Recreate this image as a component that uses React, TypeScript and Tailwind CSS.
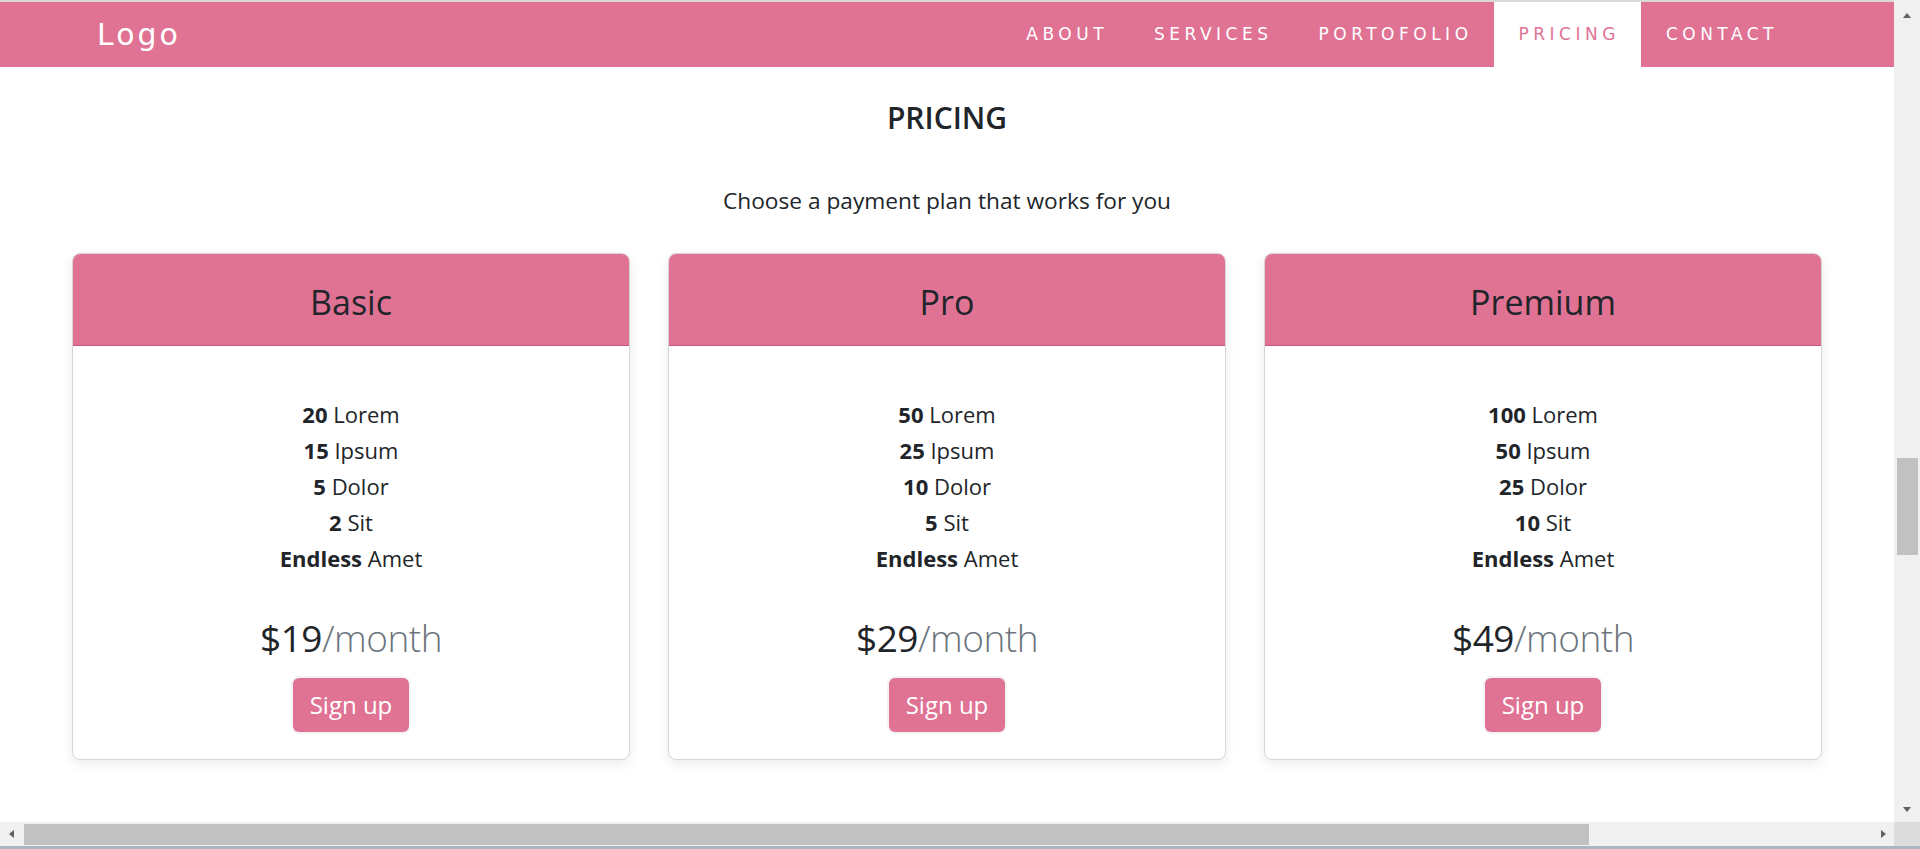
import React from 'react'

type Plan = {
  name: string
  price: number
  items: [string, string][]
}

const plans: Plan[] = [
  {
    name: 'Basic',
    price: 19,
    items: [['20', 'Lorem'], ['15', 'Ipsum'], ['5', 'Dolor'], ['2', 'Sit'], ['Endless', 'Amet']],
  },
  {
    name: 'Pro',
    price: 29,
    items: [['50', 'Lorem'], ['25', 'Ipsum'], ['10', 'Dolor'], ['5', 'Sit'], ['Endless', 'Amet']],
  },
  {
    name: 'Premium',
    price: 49,
    items: [['100', 'Lorem'], ['50', 'Ipsum'], ['25', 'Dolor'], ['10', 'Sit'], ['Endless', 'Amet']],
  },
]

const navLinks = ['ABOUT', 'SERVICES', 'PORTOFOLIO', 'PRICING', 'CONTACT']

function Arrow({ dir }: { dir: 'up' | 'down' | 'left' | 'right' }) {
  const points = {
    up: '0,5 4,0 8,5',
    down: '0,0 8,0 4,5',
    left: '5,0 5,8 0,4',
    right: '0,0 0,8 5,4',
  }[dir]
  const vertical = dir === 'up' || dir === 'down'
  return (
    <svg width={vertical ? 8 : 5} height={vertical ? 5 : 8} viewBox={vertical ? '0 0 8 5' : '0 0 5 8'}>
      <polygon points={points} fill="#606060" />
    </svg>
  )
}

function PricingCard({ plan }: { plan: Plan }) {
  return (
    <div className="rounded-lg border border-[#d6d6d6] bg-white shadow-[0_4px_12px_rgba(0,0,0,0.08)] overflow-hidden">
      <div className="h-[92px] pt-[4px] bg-[#e07294] border-b border-[#c8587c] flex items-center justify-center">
        <h1 className="text-[34px] leading-none text-[#212529]">{plan.name}</h1>
      </div>
      <div className="pt-[50px] pb-[27px] flex flex-col items-center">
        <ul className="text-[22px] leading-[36px] text-center">
          {plan.items.map(([count, label], i) => (
            <li key={i}>
              <span className="font-bold">{count}</span> {label}
            </li>
          ))}
        </ul>
        <p className="mt-[38px] text-[37px] leading-[48px] tracking-[-0.5px]">
          ${plan.price}
          <span className="text-[#6c757d] font-light">/month</span>
        </p>
        <button className="mt-[16px] h-[54px] w-[116px] rounded-md bg-[#e07294] text-white text-[24px] ring-2 ring-[#f4f4f4]">
          Sign up
        </button>
      </div>
    </div>
  )
}

export default function App() {
  return (
    <div className="h-[849px] w-full overflow-hidden flex flex-col bg-white text-[#212529] font-['Open_Sans',sans-serif]">
      <div className="flex flex-1 min-h-0">
        <div className="flex-1 min-w-0 flex flex-col">
          <div className="h-[2px] bg-[#d9d9d9]" />
          <nav className="h-[65px] bg-[#e07294] flex items-stretch font-['DejaVu_Sans',sans-serif] text-white">
            <a className="pl-[97px] flex items-center text-[30px] tracking-[3px]">Logo</a>
            <ul className="ml-auto mr-[95px] flex items-stretch text-[17px] tracking-[4.5px]">
              {navLinks.map((link) => (
                <li
                  key={link}
                  className={
                    link === 'PRICING'
                      ? 'flex items-center pl-[25px] pr-[21px] bg-white text-[#e07294]'
                      : 'flex items-center pl-[25px] pr-[21px]'
                  }
                >
                  {link}
                </li>
              ))}
            </ul>
          </nav>

          <section className="flex flex-col items-center">
            <h2 className="mt-[33px] text-[30px] leading-[36px] font-semibold">PRICING</h2>
            <h4 className="mt-[49px] text-[22.7px] leading-[32px]">Choose a payment plan that works for you</h4>
          </section>

          <div className="mt-[36px] px-[72px] grid grid-cols-3 gap-[38px]">
            {plans.map((plan) => (
              <PricingCard key={plan.name} plan={plan} />
            ))}
          </div>
        </div>

        <div className="w-[26px] bg-[#f0f0f0] flex flex-col items-center">
          <div className="h-[30px] flex items-center justify-center">
            <Arrow dir="up" />
          </div>
          <div className="h-[428px]" />
          <div className="h-[97px] w-[21px] ml-[1px] bg-[#c1c1c1]" />
          <div className="flex-1" />
          <div className="h-[26px] flex items-center justify-center">
            <Arrow dir="down" />
          </div>
        </div>
      </div>

      <div className="h-[24px] flex bg-[#f0f0f0]">
        <div className="w-[22px] flex items-center justify-center">
          <Arrow dir="left" />
        </div>
        <div className="ml-[2px] mt-[2px] mb-[1px] w-[1565px] bg-[#c1c1c1]" />
        <div className="flex-1" />
        <div className="w-[22px] flex items-center justify-center">
          <Arrow dir="right" />
        </div>
        <div className="w-[26px] bg-[#dcdcdc]" />
      </div>
      <div className="h-[3px] bg-[#a9b7c1]" />
    </div>
  )
}
